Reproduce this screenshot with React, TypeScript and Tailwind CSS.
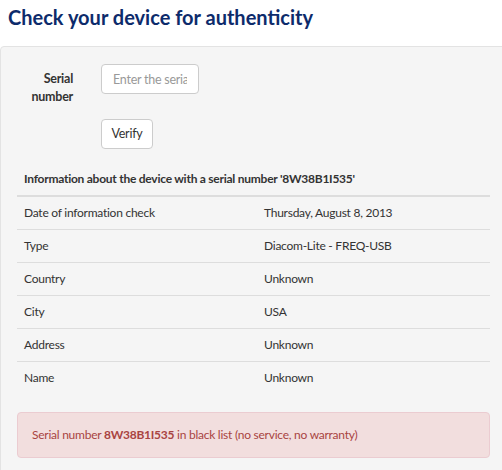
import React from "react";

const rows: [string, string][] = [
  ["Date of information check", "Thursday, August 8, 2013"],
  ["Type", "Diacom-Lite - FREQ-USB"],
  ["Country", "Unknown"],
  ["City", "USA"],
  ["Address", "Unknown"],
  ["Name", "Unknown"],
];

export default function App() {
  return (
    <div className="w-[502px] h-[470px] overflow-hidden bg-white text-[#333333] font-['Lato','Open_Sans',sans-serif] text-[12px] tracking-[-0.25px]">
      <h1 className="h-[46px] pl-[8px] pt-[5px] text-[20px] leading-[24px] font-bold tracking-normal text-[#0d2b6b]">
        Check your device for authenticity
      </h1>
      <div className="w-[510px] border border-[#e3e3e3] rounded-[4px] bg-[#f5f5f5] px-[16px] pt-[17px] pb-[20px]">
        <div className="flex items-start">
          <label className="w-[56px] pt-[6px] text-right font-bold leading-[18px] text-[12.5px]">
            Serial number
          </label>
          <input
            className="ml-[28px] w-[98px] h-[30px] px-[11px] bg-white border border-[#cccccc] rounded-[4px] text-[12.5px] placeholder:text-[#999999] outline-none"
            placeholder="Enter the serial number"
          />
        </div>
        <div className="mt-[13px] pl-[84px]">
          <button className="h-[30px] w-[52px] bg-white border border-[#cccccc] rounded-[4px] text-[12.5px] text-[#333333]">
            Verify
          </button>
        </div>
        <div className="mt-[14px] w-[473px]">
          <div className="h-[34px] px-[7px] flex items-center font-bold border-b-2 border-[#dddddd]">
            Information about the device with a serial number '8W38B1I535'
          </div>
          {rows.map(([k, v], i) => (
            <div
              key={k}
              className={
                i === 0
                  ? "grid grid-cols-[240px_1fr] h-[32px] items-center px-[7px]"
                  : "grid grid-cols-[240px_1fr] h-[33px] items-center px-[7px] border-t border-[#dddddd]"
              }
            >
              <span>{k}</span>
              <span>{v}</span>
            </div>
          ))}
          <div className="mt-[18px] h-[46px] flex items-center px-[14px] bg-[#f2dede] border border-[#ebccd1] rounded-[4px] text-[#a94442]">
            <span>
              Serial number <b>8W38B1I535</b> in black list (no service, no warranty)
            </span>
          </div>
        </div>
      </div>
    </div>
  );
}
